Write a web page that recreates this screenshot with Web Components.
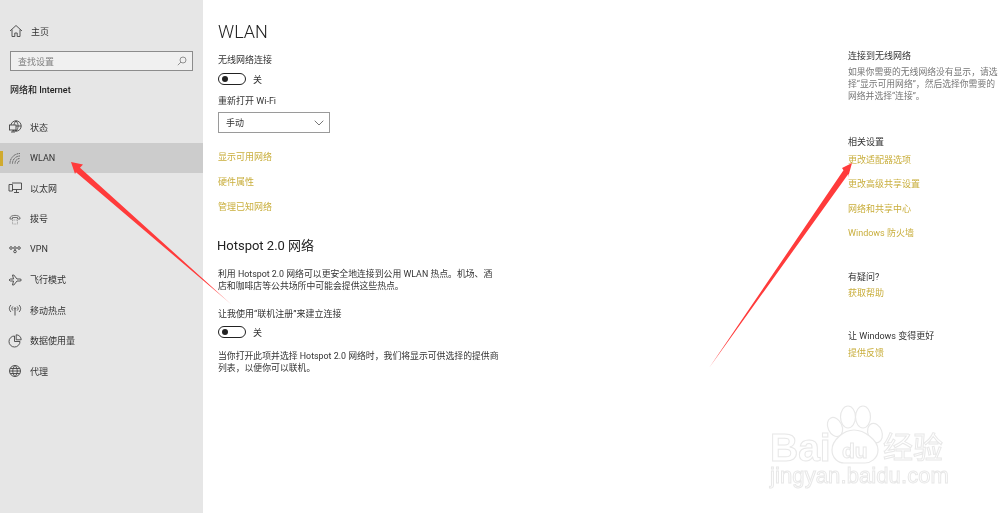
<!DOCTYPE html>
<html lang="zh">
<head>
<meta charset="utf-8">
<title>WLAN</title>
<style>
html, body { margin: 0; padding: 0; height: 513px; overflow: hidden; background: #fff; }
body { display: flex; position: relative; font-family: Roboto, "Noto Sans CJK SC", sans-serif; font-size: 9px; color: #333; filter: blur(.35px); }
</style>
</head>
<body>
<settings-nav>
  <nav-item icon="status">状态</nav-item>
  <nav-item icon="wifi" active>WLAN</nav-item>
  <nav-item icon="ethernet">以太网</nav-item>
  <nav-item icon="dial">拨号</nav-item>
  <nav-item icon="vpn">VPN</nav-item>
  <nav-item icon="plane">飞行模式</nav-item>
  <nav-item icon="hotspot">移动热点</nav-item>
  <nav-item icon="data">数据使用量</nav-item>
  <nav-item icon="globe">代理</nav-item>
</settings-nav>
<wlan-panel></wlan-panel>
<related-panel></related-panel>
<red-arrows></red-arrows>
<baidu-mark></baidu-mark>

<script>
const ICONS = {
  status: '<circle cx="9" cy="7" r="5.200"/><path d="M3.800 7h10.400M9 1.800c-2.800 3.200-2.800 7.200 0 10.400M9 1.800c2.800 3.200 2.800 7.200 0 10.400"/><rect x="2.500" y="6" width="6.500" height="5" fill="#e6e6e6"/><path d="M4 13h4M6 11v2"/>',
  wifi: '<path d="M3 13.500a10 10 0 0 1 10-10M5.500 13.500a7.500 7.500 0 0 1 7.500-7.500M8 13.500a5 5 0 0 1 5-5M10.500 13.500a2.500 2.500 0 0 1 2.500-2.500" stroke-dasharray="1.200 .6"/>',
  ethernet: '<path d="M5 3h9.500v6.500H5M7 12.500h5M9.500 9.500v3M2 4.500h3.500V11H2z"/>',
  dial: '<path d="M3 7C3.500 3.500 12.500 3.500 13 7v1h-2.500V6.500h-5V8H3z" stroke="#666"/><path d="M5.500 9h5v4h-5z" stroke="#999" stroke-dasharray="1 .7"/>',
  vpn: '<circle cx="4" cy="7" r="1.300"/><circle cx="8" cy="7" r="1.300"/><circle cx="12" cy="7" r="1.300"/><circle cx="8" cy="10.500" r="1.300"/>',
  plane: '<path d="M2 8l1.500-1h3L5.500 3h1.300L10 7h3c1.800 0 1.800 2 0 2h-3l-3.200 4H5.500l1-4h-3z"/>',
  hotspot: '<circle cx="8" cy="6.500" r=".8"/><path d="M8 7.500v6M5.800 4.500c-1.200 1.300-1.200 2.700 0 4M10.200 4.500c1.200 1.300 1.200 2.700 0 4M4 3c-2.200 2.300-2.200 4.700 0 7M12 3c2.200 2.300 2.200 4.700 0 7"/>',
  data: '<path d="M7.500 3a5.500 5.500 0 1 0 5.500 5.500H7.500z"/><path d="M9.200 1.800a5 5 0 0 1 5 5h-5z"/>',
  globe: '<circle cx="8" cy="8" r="5.500"/><path d="M2.500 8h11M3.200 5.500h9.600M3.200 10.500h9.600M8 2.500c-3 3.200-3 7.800 0 11M8 2.500c3 3.200 3 7.800 0 11"/>',
  home: '<path d="M2 8l6-5.500L14 8M4 6.500V13.500h2.800v-3.500h2.400v3.500H12V6.500"/>'
};

function iconSvg(name, size) {
  return `<svg width="${size}" height="${size}" viewBox="0 0 16 16" fill="none" stroke="#444" stroke-width=".9">${ICONS[name]}</svg>`;
}

class NavItem extends HTMLElement {
  constructor() {
    super();
    this.attachShadow({ mode: "open" });
  }
  connectedCallback() {
    this.shadowRoot.innerHTML = `
    <style>
      :host { display: flex; align-items: center; height: 30.500px; padding-left: 7px; position: relative; font-size: 9px; color: #333; }
      :host([active]) { background: #cccccc; }
      :host([active])::before { content: ""; position: absolute; left: 0; top: 8px; width: 3px; height: 15px; background: #d0aa2e; }
      .icon { width: 16px; height: 16px; margin-right: 7px; display: block; }
      svg { display: block; }
    </style>
    <span class="icon">${iconSvg(this.getAttribute("icon"), 16)}</span>
    <slot></slot>`;
  }
}
customElements.define("nav-item", NavItem);

class SettingsNav extends HTMLElement {
  constructor() {
    super();
    this.attachShadow({ mode: "open" }).innerHTML = `
    <style>
      :host { display: block; flex: 0 0 203px; width: 203px; height: 513px; background: #e6e6e6; box-sizing: border-box; padding-top: 23px; }
      .home { display: flex; align-items: center; height: 16px; padding-left: 8px; font-size: 9px; }
      .home svg { margin-right: 7px; display: block; }
      .search { display: flex; align-items: center; justify-content: space-between; box-sizing: border-box; width: 183px; height: 20px; margin: 12px 0 0 10px; padding: 0 5px 0 7px; border: 1px solid #8c8c8c; background: #f0f0f0; color: #808080; }
      h2 { margin: 13px 0 0 10px; font-size: 9px; line-height: 12px; font-weight: 500; color: #222; }
      .rows { margin-top: 16px; }
      svg { display: block; }
    </style>
    <div class="home">${iconSvg("home", 16)}主页</div>
    <div class="search"><span>查找设置</span>
      <svg width="10" height="10" viewBox="0 0 10 10" fill="none" stroke="#909090"><circle cx="6" cy="4" r="3"/><path d="M4 6L.8 9.200"/></svg>
    </div>
    <h2>网络和 Internet</h2>
    <div class="rows"><slot></slot></div>`;
  }
}
customElements.define("settings-nav", SettingsNav);

class ToggleSwitch extends HTMLElement {
  constructor() {
    super();
    this.attachShadow({ mode: "open" }).innerHTML = `
    <style>
      :host { display: flex; align-items: center; height: 12px; font-size: 9px; color: #333; }
      .track { box-sizing: border-box; width: 28px; height: 12px; border: 1.500px solid #222; border-radius: 6px; display: flex; align-items: center; padding-left: 3px; margin-right: 7px; }
      .dot { width: 6px; height: 6px; border-radius: 50%; background: #222; }
    </style>
    <span class="track"><span class="dot"></span></span><slot></slot>`;
  }
}
customElements.define("toggle-switch", ToggleSwitch);

class DropDown extends HTMLElement {
  constructor() {
    super();
    this.attachShadow({ mode: "open" }).innerHTML = `
    <style>
      :host { display: flex; align-items: center; justify-content: space-between; box-sizing: border-box; width: 112px; height: 21px; border: 1px solid #9a9a9a; padding: 0 5px 0 7px; font-size: 9px; color: #333; }
      svg { display: block; }
    </style>
    <slot></slot>
    <svg width="10" height="6" viewBox="0 0 10 6" fill="none" stroke="#777"><path d="M.7.700L5 5l4.300-4.300"/></svg>`;
  }
}
customElements.define("drop-down", DropDown);

class WlanPanel extends HTMLElement {
  constructor() {
    super();
    this.attachShadow({ mode: "open" }).innerHTML = `
    <style>
      :host { display: block; flex: 0 0 645px; width: 645px; box-sizing: border-box; padding: 19px 0 0 15px; }
      h1 { margin: 0; font-size: 18px; line-height: 26px; font-weight: 300; color: #222; }
      h2 { margin: 23px 0 0 -1px; font-size: 13px; line-height: 20px; font-weight: 400; color: #222; }
      div { line-height: 12px; }
      .lnk { color: #c9ae3c; }
      p { margin: 13px 0 0; line-height: 11.500px; font-size: 8.850px; }
    </style>
    <h1>WLAN</h1>
    <div style="margin-top:9px">无线网络连接</div>
    <toggle-switch style="margin-top:7px">关</toggle-switch>
    <div style="margin-top:10px">重新打开 Wi-Fi</div>
    <drop-down style="margin-top:5px">手动</drop-down>
    <div class="lnk" style="margin-top:18px">显示可用网络</div>
    <div class="lnk" style="margin-top:13px">硬件属性</div>
    <div class="lnk" style="margin-top:13px">管理已知网络</div>
    <h2>Hotspot 2.0 网络</h2>
    <p>利用 Hotspot 2.0 网络可以更安全地连接到公用 WLAN 热点。机场、酒<br>店和咖啡店等公共场所中可能会提供这些热点。</p>
    <div style="margin-top:16px">让我使用“联机注册”来建立连接</div>
    <toggle-switch style="margin-top:6px">关</toggle-switch>
    <p>当你打开此项并选择 Hotspot 2.0 网络时，我们将显示可供选择的提供商<br>列表，以便你可以联机。</p>`;
  }
}
customElements.define("wlan-panel", WlanPanel);

class RelatedPanel extends HTMLElement {
  constructor() {
    super();
    this.attachShadow({ mode: "open" }).innerHTML = `
    <style>
      :host { display: block; flex: 0 0 152px; width: 152px; box-sizing: border-box; padding-top: 50px; white-space: nowrap; }
      div { line-height: 12px; }
      .lnk { color: #c9ae3c; }
      p { margin: 4px 0 0; line-height: 12px; font-size: 8.800px; color: #777; }
    </style>
    <div>连接到无线网络</div>
    <p>如果你需要的无线网络没有显示，请选<br>择“显示可用网络”，然后选择你需要的<br>网络并选择“连接”。</p>
    <div style="margin-top:34px">相关设置</div>
    <div class="lnk" style="margin-top:6px">更改适配器选项</div>
    <div class="lnk" style="margin-top:12px">更改高级共享设置</div>
    <div class="lnk" style="margin-top:13px">网络和共享中心</div>
    <div class="lnk" style="margin-top:12px">Windows 防火墙</div>
    <div style="margin-top:32px">有疑问?</div>
    <div class="lnk" style="margin-top:4px">获取帮助</div>
    <div style="margin-top:31px">让 Windows 变得更好</div>
    <div class="lnk" style="margin-top:5px">提供反馈</div>`;
  }
}
customElements.define("related-panel", RelatedPanel);

class RedArrows extends HTMLElement {
  constructor() {
    super();
    this.attachShadow({ mode: "open" }).innerHTML = `
    <style>
      :host { position: absolute; left: 0; top: 0; width: 1000px; height: 513px; pointer-events: none; }
      svg { display: block; }
    </style>
    <svg width="1000" height="513" viewBox="0 0 1000 513">
      <defs>
        <linearGradient id="a" gradientUnits="userSpaceOnUse" x1="78" y1="170" x2="232" y2="305"><stop offset=".85" stop-color="#ff3b3b"/><stop offset="1" stop-color="#ffb0b0"/></linearGradient>
      </defs>
      <path d="M71 162L83 164.500 80 167.800 232 305 76 172.200 75 174z" fill="url(#a)"/>
      <path d="M852 163L842 168 843.500 170.300 709 368 848.500 173.700 848 177.500z" fill="#ff3b3b"/>
    </svg>`;
  }
}
customElements.define("red-arrows", RedArrows);

class BaiduMark extends HTMLElement {
  constructor() {
    super();
    this.attachShadow({ mode: "open" }).innerHTML = `
    <style>
      :host { position: absolute; left: 760px; top: 400px; width: 200px; height: 100px; pointer-events: none; font-family: "Liberation Sans", "Noto Sans CJK SC", sans-serif; font-weight: 700; color: #fff; -webkit-text-stroke: 1px #e8e8e8; }
      span { position: absolute; white-space: nowrap; }
      svg { position: absolute; left: 0; top: 0; }
    </style>
    <svg width="200" height="100" viewBox="0 0 200 100" fill="#fff" stroke="#e8e8e8" stroke-width="1.200">
      <ellipse cx="75" cy="27" rx="7" ry="10" transform="rotate(-25 75 27)"/>
      <ellipse cx="88" cy="17" rx="7.500" ry="11"/>
      <ellipse cx="103" cy="17" rx="7.500" ry="11"/>
      <ellipse cx="115" cy="33" rx="7" ry="10" transform="rotate(-20 115 33)"/>
      <path d="M72 50c0-10 12-20 22-20s24 10 24 20c0 9-8 13-13 13H84c-6 0-12-5-12-13z"/>
    </svg>
    <span style="left:10px;top:30px;font-size:39px;line-height:36px">Bai</span>
    <span style="left:82px;top:41px;font-size:21px;line-height:20px">du</span>
    <span style="left:123px;top:33px;font-size:30px;line-height:30px;font-weight:400">经验</span>
    <span style="left:10px;top:67px;font-size:22px;line-height:18px;font-weight:400;letter-spacing:.1px">jingyan.baidu.com</span>`;
  }
}
customElements.define("baidu-mark", BaiduMark);
</script>
</body>
</html>
